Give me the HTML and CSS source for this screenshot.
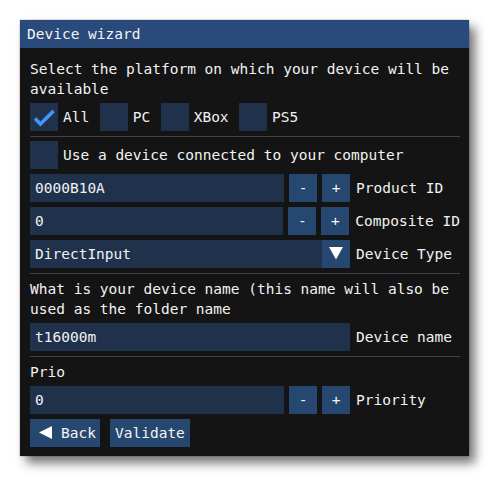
FILE: index.html
```html
<!DOCTYPE html>
<html>
<head>
<meta charset="utf-8">
<link rel="stylesheet" href="styles.css">
</head>
<body>
<div class="window">
  <div class="titlebar">Device wizard</div>
  <div class="content">
    <div class="text">Select the platform on which your device will be<br>available</div>
    <div class="row cb-row tight">
      <div class="cb-item">
        <span class="box"><svg width="28" height="28" viewBox="0 0 28 28"><path d="M5 15.5 L10.5 21 L23.5 8" fill="none" stroke="#4296fa" stroke-width="3.6" stroke-linecap="butt" stroke-linejoin="miter"/></svg></span>
        <span class="label">All</span>
      </div>
      <div class="cb-item"><span class="box"></span><span class="label">PC</span></div>
      <div class="cb-item"><span class="box"></span><span class="label">XBox</span></div>
      <div class="cb-item"><span class="box"></span><span class="label">PS5</span></div>
    </div>
    <div class="sep"></div>
    <div class="row tight">
      <div class="cb-item"><span class="box"></span><span class="label">Use a device connected to your computer</span></div>
    </div>
    <div class="row">
      <div class="input short">0000B10A</div>
      <div class="btn sq">-</div>
      <div class="btn sq">+</div>
      <span class="label side">Product ID</span>
    </div>
    <div class="row">
      <div class="input short">0</div>
      <div class="btn sq">-</div>
      <div class="btn sq">+</div>
      <span class="label side">Composite ID</span>
    </div>
    <div class="row">
      <div class="combo">
        <div class="combo-value">DirectInput</div>
        <div class="combo-arrow"><svg width="28" height="28" viewBox="0 0 28 28"><path d="M7 7 L21 7 L14 19.5 Z" fill="#ffffff"/></svg></div>
      </div>
      <span class="label side">Device Type</span>
    </div>
    <div class="sep"></div>
    <div class="text">What is your device name (this name will also be<br>used as the folder name</div>
    <div class="row tight">
      <div class="input long">t16000m</div>
      <span class="label side">Device name</span>
    </div>
    <div class="sep"></div>
    <div class="text">Prio</div>
    <div class="row tight">
      <div class="input short">0</div>
      <div class="btn sq">-</div>
      <div class="btn sq">+</div>
      <span class="label side">Priority</span>
    </div>
    <div class="row">
      <div class="btn back"><svg width="13" height="14" viewBox="0 0 13 14"><path d="M0 6.5 L13 0 L13 13 Z" fill="#ffffff"/></svg><span>Back</span></div>
      <div class="btn validate">Validate</div>
    </div>
  </div>
</div>
</body>
</html>
```

FILE: styles.css
```css
html, body {
  margin: 0;
  padding: 0;
  background: #ffffff;
}
body {
  padding: 20px 0 21px 20px;
  font-family: "DejaVu Sans Mono", "Liberation Mono", monospace;
  font-size: 14.5px;
  color: #f2f2f2;
}
.window {
  width: 449px;
  height: 436px;
  background: #141414;
  box-shadow: 0 0 1px rgba(0,0,0,0.6), 6px 7px 10px rgba(0,0,0,0.55);
  display: flex;
  flex-direction: column;
}
.titlebar {
  height: 28px;
  line-height: 29px;
  background: #2a4a7b;
  padding-left: 7px;
  color: #f4f4f4;
}
.content {
  padding: 11px 9px 9px 10px;
  display: flex;
  flex-direction: column;
  gap: 5px;
}
.text {
  line-height: 20px;
  white-space: nowrap;
}
.tight {
  margin-top: -1px;
}
.row {
  display: flex;
  align-items: center;
  height: 28px;
  gap: 5px;
}
.cb-row {
  gap: 10.5px;
}
.cb-item {
  display: flex;
  align-items: center;
  gap: 5px;
}
.box {
  width: 28px;
  height: 28px;
  background: #1f314b;
  display: block;
}
.box svg {
  display: block;
}
.label {
  line-height: 20px;
  white-space: nowrap;
}
.side {
  margin-left: 1px;
}
.sep {
  height: 1px;
  background: #41414a;
}
.input {
  height: 28px;
  line-height: 28px;
  background: #1f314b;
  padding-left: 5px;
  box-sizing: border-box;
}
.short {
  width: 254px;
}
.long {
  width: 320px;
}
.btn {
  height: 28px;
  line-height: 28px;
  background: #264870;
  color: #f4f4f4;
  box-sizing: border-box;
}
.sq {
  width: 28px;
  text-align: center;
}
.combo {
  width: 320px;
  height: 28px;
  display: flex;
  background: #1f314b;
}
.combo-value {
  flex: 1;
  line-height: 28px;
  padding-left: 5px;
}
.combo-arrow {
  width: 28px;
  height: 28px;
  background: #264870;
}
.combo-arrow svg {
  display: block;
}
.back {
  width: 70px;
  display: flex;
  align-items: center;
  padding-left: 9px;
  gap: 9px;
}
.back svg {
  display: block;
}
.validate {
  width: 80px;
  padding-left: 5px;
  margin-left: 5px;
}
```
